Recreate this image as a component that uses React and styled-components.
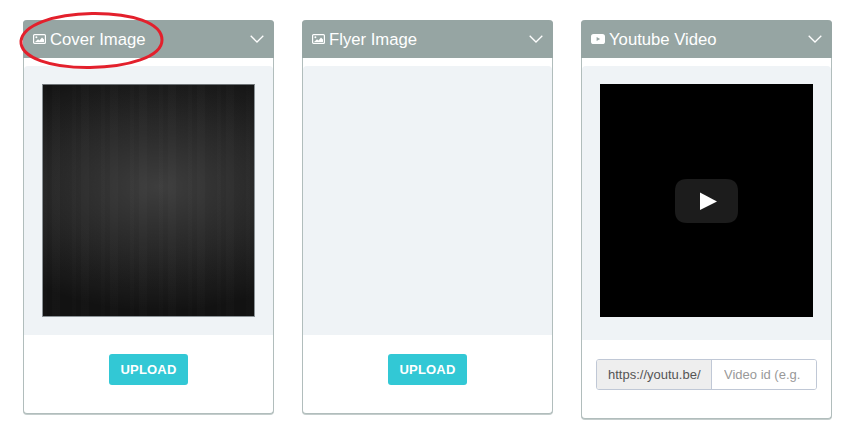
import React from 'react';
import styled, { createGlobalStyle } from 'styled-components';

const GlobalStyle = createGlobalStyle`
  html, body {
    margin: 0;
    padding: 0;
    background: #ffffff;
    font-family: 'Liberation Sans', Arial, sans-serif;
  }
`;

const Page = styled.div`
  position: relative;
  width: 853px;
  height: 433px;
  overflow: hidden;
  box-sizing: border-box;
  padding: 20px 0 0 23px;
  display: flex;
  align-items: flex-start;
  gap: 28px;
`;

const Card = styled.section`
  width: 251px;
  box-sizing: border-box;
  background: #fff;
  border: 1px solid #b1bdbc;
  border-top: 0;
  border-radius: 4px;
  box-shadow: 0 1px 0 #c4cdcc;
`;

const Header = styled.header`
  height: 38px;
  margin: 0 -1px;
  padding: 0 10px 0 10px;
  display: flex;
  align-items: center;
  background: #96a5a3;
  border-radius: 4px 4px 0 0;
  color: #fff;
`;

const Title = styled.h3`
  margin: 0 0 0 4px;
  padding-top: 1px;
  flex: 1;
  font-size: 16.7px;
  font-weight: 400;
  line-height: 37px;
`;

const Preview = styled.div`
  margin-top: 8px;
  padding: 18px;
  background: #eff3f6;
  border-radius: 4px 4px 0 0;
  height: ${(p) => p.$height}px;
  box-sizing: border-box;
`;

const Wood = styled.div`
  width: 213px;
  height: 233px;
  box-sizing: border-box;
  border: 1px solid #8b9296;
  border-top-color: #6f7477;
  background:
    repeating-linear-gradient(90deg, rgba(255,255,255,0.008) 0 4px, rgba(0,0,0,0.02) 4px 9px, rgba(255,255,255,0.012) 9px 17px, rgba(0,0,0,0.018) 17px 29px),
    radial-gradient(ellipse 200px 125px at 55% 44%, rgba(255,255,255,0.19), rgba(255,255,255,0.09) 55%, rgba(255,255,255,0) 100%),
    #121212;
`;

const Video = styled.div`
  width: 213px;
  height: 233px;
  background: #000;
  display: flex;
  align-items: center;
  justify-content: center;
`;

const Footer = styled.div`
  display: flex;
  justify-content: center;
  padding: 19px 14px 28px;
`;

const UploadButton = styled.button`
  width: 79px;
  height: 31px;
  padding: 0;
  border: 0;
  border-radius: 3px;
  background: #32c8d5;
  color: #fff;
  font-family: 'Liberation Sans', Arial, sans-serif;
  font-size: 13px;
  font-weight: 700;
  letter-spacing: 0.2px;
`;

const InputGroup = styled.div`
  width: 221px;
  height: 31px;
  box-sizing: border-box;
  display: flex;
  border: 1px solid #c0c8d6;
  border-radius: 3px;
  overflow: hidden;
  font-size: 13px;
`;

const Addon = styled.span`
  width: 115px;
  flex: none;
  box-sizing: border-box;
  padding-left: 11px;
  line-height: 29px;
  color: #555;
  background: #eeeeee;
  border-right: 1px solid #c0c8d6;
`;

const VideoInput = styled.input`
  flex: 1;
  min-width: 0;
  border: 0;
  outline: 0;
  padding: 0 0 0 12px;
  font-family: 'Liberation Sans', Arial, sans-serif;
  font-size: 13px;
  background: #fff;
  &::placeholder {
    color: #999;
    opacity: 1;
  }
`;

const Circle = styled.svg`
  position: absolute;
  left: 16px;
  top: 8px;
`;

const ImageIcon = () => (
  <svg width="13" height="10" viewBox="0 0 13 10">
    <rect x="0.6" y="0.6" width="11.8" height="8.8" rx="1" fill="none" stroke="#fff" strokeWidth="1.2" />
    <circle cx="3.4" cy="3.2" r="1" fill="#fff" />
    <path d="M2 8 L5 5.2 L6.5 6.4 L9 3.6 L11 5.6 V8 Z" fill="#fff" />
  </svg>
);

const YoutubeIcon = () => (
  <svg width="14" height="10" viewBox="0 0 14 10">
    <rect width="14" height="10" rx="2.6" fill="#fff" />
    <path d="M5.6 3 L9.2 5 L5.6 7 Z" fill="#96a5a3" />
  </svg>
);

const Chevron = () => (
  <svg width="14" height="8" viewBox="0 0 14 8">
    <path d="M0.7 0.8 L7 7 L13.3 0.8" fill="none" stroke="#fff" strokeWidth="1.3" />
  </svg>
);

const PlayBadge = () => (
  <svg width="63" height="44" viewBox="0 0 63 44">
    <path d="M12 0 H51 C59 0 63 4 63 12 V32 C63 40 59 44 51 44 H12 C4 44 0 40 0 32 V12 C0 4 4 0 12 0 Z" fill="#1c1c1c" />
    <path d="M25 13.500 L42 22.500 L25 31 Z" fill="#fff" />
  </svg>
);

function UploadCard({ title, children }) {
  return (
    <Card>
      <Header>
        <ImageIcon />
        <Title>{title}</Title>
        <Chevron />
      </Header>
      <Preview $height={269}>{children}</Preview>
      <Footer>
        <UploadButton>UPLOAD</UploadButton>
      </Footer>
    </Card>
  );
}

export default function App() {
  return (
    <>
      <GlobalStyle />
      <Page>
        <UploadCard title="Cover Image">
          <Wood />
        </UploadCard>
        <UploadCard title="Flyer Image" />
        <Card>
          <Header>
            <YoutubeIcon />
            <Title>Youtube Video</Title>
            <Chevron />
          </Header>
          <Preview $height={274}>
            <Video>
              <PlayBadge />
            </Video>
          </Preview>
          <Footer>
            <InputGroup>
              <Addon>https://youtu.be/</Addon>
              <VideoInput placeholder="Video id (e.g." />
            </InputGroup>
          </Footer>
        </Card>
        <Circle width="150" height="64" viewBox="0 0 150 64">
          <path
            d="M5 33 C7 17 38 6 76 5.500 C116 5 146 15 146 32 C146 49 112 59 74 59.500 C36 60 4 50 5 33 Z"
            fill="none"
            stroke="#e3202c"
            strokeWidth="3"
          />
        </Circle>
      </Page>
    </>
  );
}
